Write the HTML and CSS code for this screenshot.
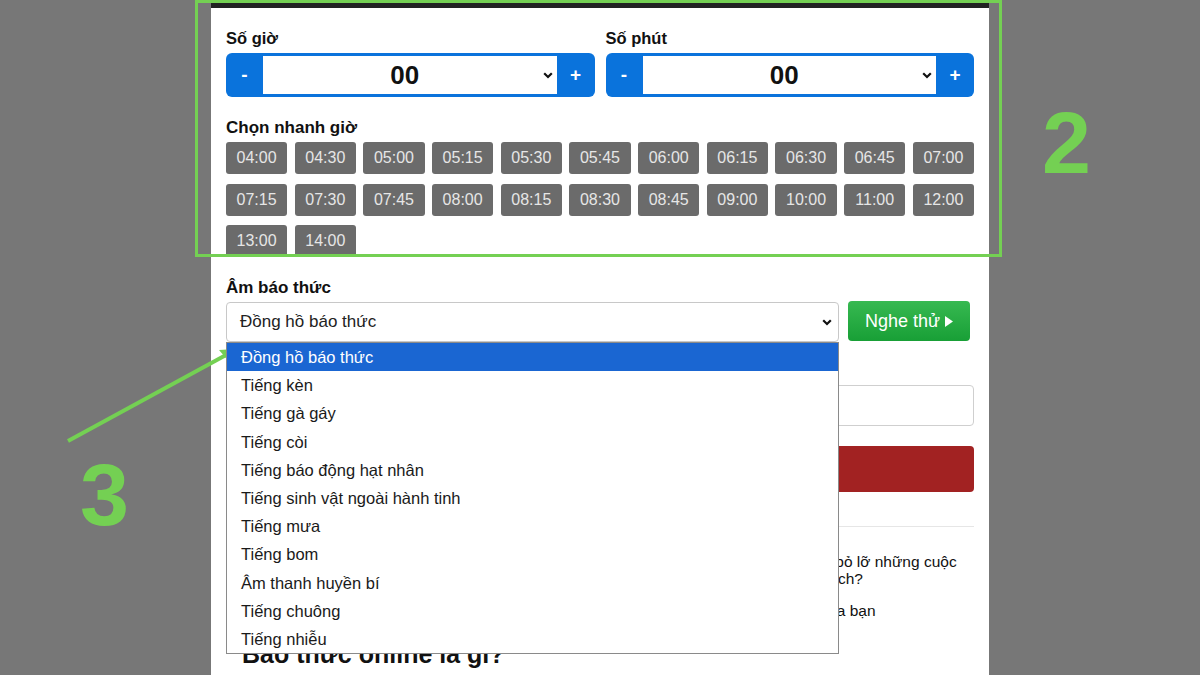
FILE: index.html
```html
<!DOCTYPE html>
<html lang="vi">
<head>
<meta charset="utf-8">
<title>Báo thức online</title>
<link rel="stylesheet" href="styles.css">
</head>
<body>
<main class="page">
  <section class="timer">
    <div class="pickers">
      <div class="picker">
        <div class="label">Số giờ</div>
        <div class="spinner">
          <button class="step">-</button>
          <div class="value"><span class="num">00</span><svg class="chev" width="10" height="7" viewBox="0 0 10 7"><path d="M1.2 1.2 L5 5 L8.8 1.2" fill="none" stroke="#111" stroke-width="2.2"/></svg></div>
          <button class="step">+</button>
        </div>
      </div>
      <div class="picker">
        <div class="label">Số phút</div>
        <div class="spinner">
          <button class="step">-</button>
          <div class="value"><span class="num">00</span><svg class="chev" width="10" height="7" viewBox="0 0 10 7"><path d="M1.2 1.2 L5 5 L8.8 1.2" fill="none" stroke="#111" stroke-width="2.2"/></svg></div>
          <button class="step">+</button>
        </div>
      </div>
    </div>
    <div class="label quick-label">Chọn nhanh giờ</div>
    <div class="quick">
      <button class="time">04:00</button>
      <button class="time">04:30</button>
      <button class="time">05:00</button>
      <button class="time">05:15</button>
      <button class="time">05:30</button>
      <button class="time">05:45</button>
      <button class="time">06:00</button>
      <button class="time">06:15</button>
      <button class="time">06:30</button>
      <button class="time">06:45</button>
      <button class="time">07:00</button>
      <button class="time">07:15</button>
      <button class="time">07:30</button>
      <button class="time">07:45</button>
      <button class="time">08:00</button>
      <button class="time">08:15</button>
      <button class="time">08:30</button>
      <button class="time">08:45</button>
      <button class="time">09:00</button>
      <button class="time">10:00</button>
      <button class="time">11:00</button>
      <button class="time">12:00</button>
      <button class="time">13:00</button>
      <button class="time">14:00</button>
    </div>
  </section>

  <section class="sound">
    <div class="label sound-label">Âm báo thức</div>
    <div class="sound-row">
      <div class="select-wrap">
        <div class="select"><span class="select-text">Đồng hồ báo thức</span><svg class="chev" width="10" height="7" viewBox="0 0 10 7"><path d="M1.2 1.2 L5 5 L8.8 1.2" fill="none" stroke="#111" stroke-width="2.2"/></svg></div>
        <ul class="options">
          <li class="opt active">Đồng hồ báo thức</li>
          <li class="opt">Tiếng kèn</li>
          <li class="opt">Tiếng gà gáy</li>
          <li class="opt">Tiếng còi</li>
          <li class="opt">Tiếng báo động hạt nhân</li>
          <li class="opt">Tiếng sinh vật ngoài hành tinh</li>
          <li class="opt">Tiếng mưa</li>
          <li class="opt">Tiếng bom</li>
          <li class="opt">Âm thanh huyền bí</li>
          <li class="opt">Tiếng chuông</li>
          <li class="opt">Tiếng nhiễu</li>
        </ul>
      </div>
      <button class="play">Nghe thử <svg class="tri" width="8" height="11" viewBox="0 0 8 11"><path d="M0 0 L8 5.5 L0 11 Z" fill="#fff"/></svg></button>
    </div>
    <div class="label note-label">Ghi chú</div>
    <div class="input"></div>
    <button class="start">Bắt đầu báo thức</button>
  </section>

  <hr class="divider">

  <article class="info">
    <p>Bạn có thường xuyên ngủ quên vào buổi sáng hằng ngày, đi làm muộn hoặc thậm chí bỏ lỡ những cuộc hẹn quan trọng trong công việc chỉ bởi không có ai nhắc nhở bạn đúng lúc theo kế hoạch?</p>
    <p>Hãy để công cụ báo thức online miễn phí trở thành trợ thủ đắc lực, người nhắc nhở của bạn</p>
    <h2>Báo thức online là gì?</h2>
  </article>
</main>

<div class="frame"></div>
<div class="mark mark-2">2</div>
<div class="mark mark-3">3</div>
<svg class="arrow" width="1200" height="675" viewBox="0 0 1200 675">
  <line x1="68" y1="441" x2="226" y2="355" stroke="#74d053" stroke-width="4"/>
  <path d="M219 350 L235 349 L231 364 Z" fill="#74d053"/>
</svg>
</body>
</html>
```

FILE: styles.css
```css
* { box-sizing: border-box; }

html, body {
  margin: 0;
  padding: 0;
}

body {
  background: #777777;
  font-family: "Liberation Sans", Arial, sans-serif;
  color: #111;
  position: relative;
  height: 675px;
  overflow: hidden;
}

button {
  font-family: inherit;
  border: none;
  margin: 0;
  padding: 0;
  cursor: pointer;
}

.page {
  width: 778px;
  min-height: 675px;
  margin: 0 auto;
  background: #fff;
  border-top: 8px solid #222;
  padding: 21px 15px 0;
}

.label {
  font-size: 16.5px;
  font-weight: bold;
  line-height: 18px;
  margin-bottom: 6px;
  color: #111;
}

.pickers {
  display: grid;
  grid-template-columns: 1fr 1fr;
  column-gap: 11px;
}

.spinner {
  display: flex;
  height: 44px;
  background: #0a73dc;
  border-radius: 6px;
  padding: 3px 0;
}

.step {
  width: 37px;
  background: transparent;
  color: #fff;
  font-weight: bold;
  font-size: 19px;
  display: flex;
  align-items: center;
  justify-content: center;
}

.spinner .step:last-child {
  width: 38px;
}

.value {
  flex: 1;
  background: #fff;
  display: flex;
  align-items: center;
  padding-left: 4px;
  padding-right: 4px;
}

.num {
  flex: 1;
  text-align: center;
  font-size: 26px;
  font-weight: bold;
  color: #111;
}

.chev {
  display: block;
  flex: none;
}

.quick-label {
  font-size: 17px;
  margin-top: 22px;
  margin-bottom: 5px;
}

.quick {
  display: grid;
  grid-template-columns: repeat(11, 1fr);
  column-gap: 7.5px;
  row-gap: 9.5px;
}

.time {
  height: 32px;
  background: #6b6b6b;
  color: #e6e6e6;
  font-size: 16px;
  border-radius: 3px;
}

.sound-label {
  font-size: 17px;
  margin-top: 22px;
  margin-bottom: 5px;
}

.sound-row {
  display: flex;
  gap: 9px;
  align-items: flex-start;
}

.select-wrap {
  flex: 0 0 613px;
  position: relative;
}

.select {
  height: 40px;
  border: 1px solid #c8c8c8;
  border-radius: 4px;
  display: flex;
  align-items: center;
  padding: 0 6px 0 13px;
  font-size: 17px;
  color: #222;
}

.select-text {
  flex: 1;
}

.options {
  position: absolute;
  left: 0;
  top: 100%;
  width: 613px;
  margin: 0;
  padding: 0;
  list-style: none;
  background: #fff;
  border: 1px solid #8a8a8a;
  z-index: 5;
}

.opt {
  height: 28.2px;
  line-height: 28.2px;
  padding-left: 14px;
  font-size: 16.5px;
  color: #1a1a1a;
}

.opt.active {
  background: #1a66d2;
  color: #fff;
}

.play {
  width: 122px;
  height: 40px;
  margin-top: -1px;
  border-radius: 4px;
  background: linear-gradient(#37b951, #189f36);
  color: #fff;
  font-size: 18px;
  display: flex;
  align-items: center;
  justify-content: center;
  gap: 5px;
}

.tri {
  display: block;
}

.note-label {
  font-size: 16px;
  margin-top: 18px;
  margin-bottom: 7px;
}

.input {
  height: 41px;
  border: 1px solid #cfcfcf;
  border-radius: 4px;
}

.start {
  display: block;
  width: 100%;
  height: 46px;
  margin-top: 20px;
  background: #a22222;
  color: #fff;
  font-size: 18px;
  border-radius: 4px;
}

.divider {
  border: none;
  border-top: 1px solid #e6e6e6;
  margin: 34px 0 0;
}

.info {
  padding-left: 16px;
}

.info p {
  font-size: 15.5px;
  line-height: 17px;
  margin: 15px 0 0;
  color: #111;
}

.info p:first-child {
  margin-top: 26px;
}

.info h2 {
  font-size: 25px;
  line-height: 30px;
  margin: 20px 0 0;
  color: #111;
}

/* annotation overlays */
.frame {
  position: absolute;
  left: 195px;
  top: 0;
  width: 807px;
  height: 257px;
  border: 3px solid #74d053;
  pointer-events: none;
}

.mark {
  position: absolute;
  font-family: "Liberation Sans", Arial, sans-serif;
  font-weight: bold;
  font-size: 88px;
  line-height: 88px;
  color: #74d053;
}

.mark-2 {
  left: 1042px;
  top: 99px;
}

.mark-3 {
  left: 80px;
  top: 451px;
}

.arrow {
  position: absolute;
  left: 0;
  top: 0;
  pointer-events: none;
}
```
